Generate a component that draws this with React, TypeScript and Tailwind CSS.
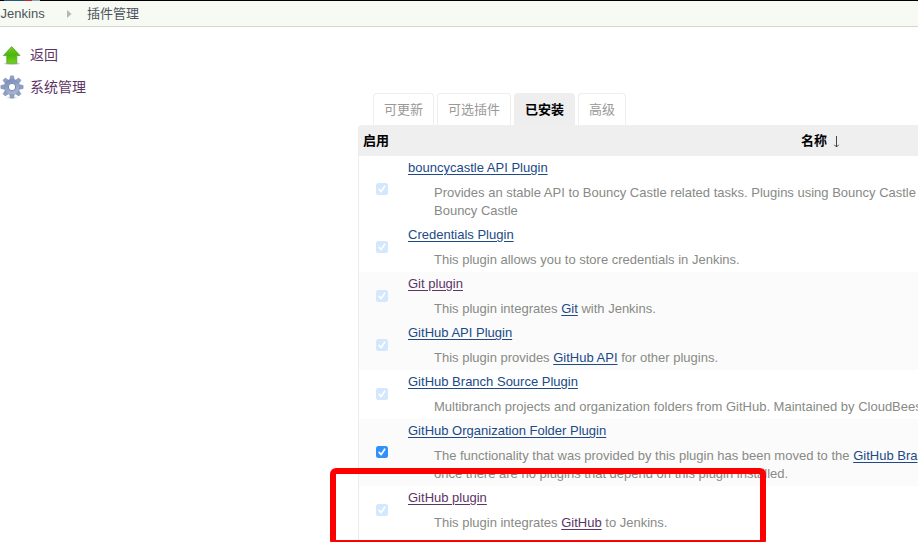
import type { ReactNode } from "react";

const blue = "text-[#204a87] underline underline-offset-[1.5px]";
const purple = "text-[#5c3566] underline underline-offset-[1.5px]";

type Plugin = {
  name: string;
  visited?: boolean;
  enabled?: boolean;
  shaded?: boolean;
  lines: ReactNode[];
};

const plugins: Plugin[] = [
  {
    name: "bouncycastle API Plugin",
    lines: [
      "Provides an stable API to Bouncy Castle related tasks. Plugins using Bouncy Castle",
      "Bouncy Castle",
    ],
  },
  { name: "Credentials Plugin", lines: ["This plugin allows you to store credentials in Jenkins."] },
  {
    name: "Git plugin",
    visited: true,
    shaded: true,
    lines: [<>This plugin integrates <a className={blue}>Git</a> with Jenkins.</>],
  },
  {
    name: "GitHub API Plugin",
    shaded: true,
    lines: [<>This plugin provides <a className={blue}>GitHub API</a> for other plugins.</>],
  },
  {
    name: "GitHub Branch Source Plugin",
    lines: ["Multibranch projects and organization folders from GitHub. Maintained by CloudBees"],
  },
  {
    name: "GitHub Organization Folder Plugin",
    enabled: true,
    shaded: true,
    lines: [
      <>The functionality that was provided by this plugin has been moved to the <a className={blue}>GitHub Bra</a></>,
      "once there are no plugins that depend on this plugin installed.",
    ],
  },
  {
    name: "GitHub plugin",
    visited: true,
    lines: [<>This plugin integrates <a className={purple}>GitHub</a> to Jenkins.</>],
  },
];

const tabs = ["可更新", "可选插件", "已安装", "高级"];

function Check({ enabled }: { enabled?: boolean }) {
  return (
    <span
      className={`flex size-3 items-center justify-center rounded-[2.5px] ${enabled ? "bg-[#3290fb]" : "bg-[#d3e7fd]"}`}
    >
      <svg viewBox="0 0 12 12" className="size-3" fill="none" stroke="white" strokeWidth="1.7">
        <path d="M3.2 6.4 5.1 8.6 8.7 3.2" strokeLinecap="round" strokeLinejoin="round" />
      </svg>
    </span>
  );
}

function UpArrow() {
  return (
    <svg viewBox="0 0 24 24" className="size-6 shrink-0">
      <defs>
        <linearGradient id="green" x1="0" y1="0" x2="0" y2="1">
          <stop offset="0" stopColor="#78cf28" />
          <stop offset=".5" stopColor="#4db50b" />
          <stop offset="1" stopColor="#72d51c" />
        </linearGradient>
      </defs>
      <ellipse cx="12" cy="20.6" rx="8" ry="1.3" fill="#000" opacity=".2" />
      <path d="M11.7 3.6 20 12.5H16.8V20.3H6.8V12.5H3.4Z" fill="url(#green)" stroke="#57a42a" strokeWidth=".8" strokeLinejoin="round" />
    </svg>
  );
}

function Gear() {
  const teeth = [0, 45, 90, 135, 180, 225, 270, 315];
  return (
    <svg viewBox="0 0 24 24" className="size-6 shrink-0">
      <defs>
        <linearGradient id="steel" gradientUnits="userSpaceOnUse" x1="7" y1="2" x2="15" y2="22">
          <stop offset="0" stopColor="#6d86b4" />
          <stop offset=".5" stopColor="#92a2c8" />
          <stop offset="1" stopColor="#b5bdd8" />
        </linearGradient>
      </defs>
      <ellipse cx="12" cy="22.6" rx="5" ry="1" fill="#000" opacity=".15" />
      <g fill="#8f9fc4" stroke="#7b8bb0" strokeWidth=".6" strokeLinejoin="round">
        {teeth.map((a) => (
          <path key={a} d="M9.6 5.4 10.5 .9H13.5L14.4 5.4Z" transform={`rotate(${a} 12 12)`} />
        ))}
      </g>
      <circle cx="12" cy="12" r="7.7" fill="url(#steel)" stroke="#8292b8" strokeWidth=".5" />
      <circle cx="12" cy="12" r="3.7" fill="#fff" stroke="#7388b6" strokeWidth="1" />
    </svg>
  );
}

export default function App() {
  return (
    <div className="relative h-[542px] w-[918px] overflow-hidden bg-white font-['Liberation_Sans','Noto_Sans_CJK_SC',sans-serif] text-[13px] leading-[18px] text-[#888a85]">
      <div className="flex h-px bg-black">
        <span className="ml-1 w-5 bg-[#285878]" />
        <span className="w-2 bg-[#b52932]" />
        <span className="w-2 bg-[#8ba6ad]" />
      </div>
      <nav className="flex h-[26px] items-center border-b border-[#d3d7cf] bg-[#f6faf2] text-[#4d545d]">
        <span className="w-[67px] pl-[0.6px]">Jenkins</span>
        <svg viewBox="0 0 5 8" className="mt-px mr-[15px] h-2 w-[5px]" fill="#b4b8b0"><path d="M0 0 4.5 4 0 8Z" /></svg>
        <span>插件管理</span>
      </nav>
      <div className="flex">
        <aside className="w-[358px] shrink-0 pt-4 text-[14px] text-[#5c3566]">
          <div className="flex h-6 items-center gap-1.5"><UpArrow />返回</div>
          <div className="mt-2 flex h-6 items-center gap-1.5"><Gear />系统管理</div>
        </aside>
        <main className="w-[560px] shrink-0 pt-[66px]">
          <div className="flex gap-[3px] pl-[15px]">
            {tabs.map((tab) => (
              <div
                key={tab}
                className={`flex h-8 items-center rounded-t-[4px] border border-b-0 px-2.5 ${
                  tab === "已安装" ? "border-[#eeeeee] bg-[#eeeeee] font-bold text-black" : "border-[#eeeeee] text-[#999]"
                }`}
              >
                {tab}
              </div>
            ))}
          </div>
          <div className="h-[417px] rounded-tl-[4px] border-l border-[#ececec]">
            <div className="flex h-[31px] items-center rounded-tl-[3px] bg-[#efefef] font-bold text-black">
              <span className="w-[442px] pl-1">启用</span>
              <span>名称</span>
              <svg viewBox="0 0 7 12" className="mt-0.5 ml-1.5 h-3 w-[7px]" fill="none" stroke="#444"><path d="M3.5 0V11M1.3 8.8 3.5 11 5.7 8.8" /></svg>
            </div>
            {plugins.map((p) => (
              <div key={p.name} className={`flex items-center ${p.shaded ? "bg-[#fbfbfb]" : "bg-white"}`}>
                <div className="w-[49px] shrink-0 pb-0.5 pl-[17px]"><Check enabled={p.enabled} /></div>
                <div className="py-[3px] whitespace-nowrap">
                  <a className={`block tracking-[0.006px] ${p.visited ? purple : blue}`}>{p.name}</a>
                  <div className="mt-[7px] pl-[26px]">
                    {p.lines.map((line, i) => <div key={i}>{line}</div>)}
                  </div>
                </div>
              </div>
            ))}
          </div>
        </main>
      </div>
      <div className="absolute top-[468px] left-[329.5px] h-[78px] w-[436.5px] rounded-[6px] border-[6px] border-[#fe0000]" />
    </div>
  );
}
